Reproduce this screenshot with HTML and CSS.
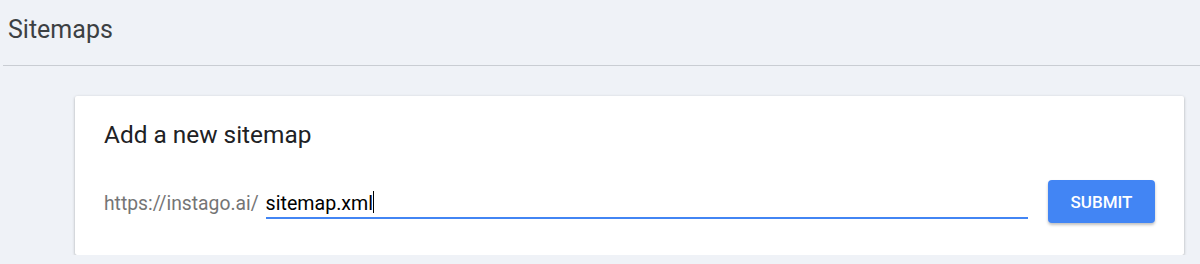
FILE: index.html
```html
<!DOCTYPE html>
<html>
<head>
	<title>Sitemaps</title>
	<link rel="stylesheet" href="styles.css">
</head>
<body>
	<header class="page-header">
		<h1>Sitemaps</h1>
	</header>
	<div class="card">
		<h2>Add a new sitemap</h2>
		<div class="form-row">
			<label class="prefix">https://instago.ai/</label>
			<div class="field">
				<span class="value">sitemap.xml</span><span class="caret"></span>
			</div>
			<button class="btn">SUBMIT</button>
		</div>
	</div>
</body>
</html>
```

FILE: styles.css
```css
body {
	background-color: #eff2f7;
	font-family: Roboto, "Noto Sans", Arial, sans-serif;
	color: #202124;
	margin: 0;
	padding: 0;
}

.page-header {
	margin-left: 3px;
	height: 65px;
	border-bottom: 1px solid #c9cdd3;
}

.page-header h1 {
	margin: 0;
	padding: 15px 0 0 5px;
	font-size: 25px;
	font-weight: 400;
	color: #3c4043;
}

.card {
	margin: 30px 16px 0 75px;
	padding: 25px 29px 32px 29px;
	background-color: #fff;
	border-radius: 2px;
	box-shadow: 0 1px 3px rgba(0, 0, 0, 0.3);
}

.card h2 {
	margin: 0;
	font-size: 24.4px;
	line-height: 28px;
	font-weight: 400;
	color: #202124;
}

.form-row {
	display: flex;
	align-items: flex-start;
	margin-top: 31px;
}

.prefix {
	font-size: 19.3px;
	color: #757575;
	margin: 12px 7px 0 0;
}

.field {
	flex: 1;
	height: 35px;
	display: flex;
	align-items: flex-end;
	padding-bottom: 2px;
	border-bottom: 2px solid #4285f4;
	font-size: 19.6px;
	color: #000;
}

.caret {
	display: inline-block;
	width: 1px;
	height: 22px;
	margin-bottom: 2px;
	background-color: #000;
}

.btn {
	margin-left: 20px;
	width: 107px;
	height: 43px;
	background-color: #4285f4;
	color: #fff;
	border: none;
	border-radius: 4px;
	font-family: Roboto, Arial, sans-serif;
	font-size: 17px;
	font-weight: 500;
	box-shadow: 0 2px 3px rgba(0, 0, 0, 0.25);
	cursor: pointer;
}
```
